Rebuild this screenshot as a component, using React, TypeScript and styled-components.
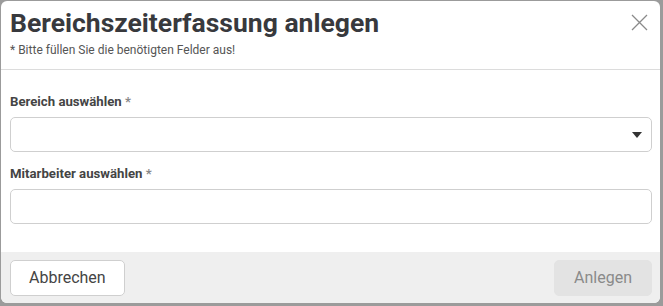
import { createGlobalStyle, styled } from 'styled-components';

const GlobalStyle = createGlobalStyle`
  html, body {
    margin: 0;
    padding: 0;
    background: #9b9b9b;
    font-family: Roboto, "Noto Sans", Arial, sans-serif;
  }
`;

type Field = {
  label: string;
  select?: boolean;
};

const fields: Field[] = [
  { label: 'Bereich auswählen', select: true },
  { label: 'Mitarbeiter auswählen' },
];

export default function App() {
  return (
    <>
      <GlobalStyle />
      <Backdrop>
        <Dialog>
          <Header>
            <TitleBlock>
              <Title>Bereichszeiterfassung anlegen</Title>
              <Hint>* Bitte füllen Sie die benötigten Felder aus!</Hint>
            </TitleBlock>
            <CloseButton aria-label="Schließen">
              <svg width="17" height="17" viewBox="0 0 17 17">
                <path d="M1 1L16 16M16 1L1 16" stroke="#8a8a8a" strokeWidth="1.3" fill="none" />
              </svg>
            </CloseButton>
          </Header>
          <Body>
            {fields.map((f) => (
              <FieldGroup key={f.label}>
                <Label>
                  {f.label} <Required>*</Required>
                </Label>
                <InputBox>
                  {f.select && (
                    <svg width="10" height="6" viewBox="0 0 10 6">
                      <path d="M0 0H10L5 6Z" fill="#333" />
                    </svg>
                  )}
                </InputBox>
              </FieldGroup>
            ))}
          </Body>
          <Footer>
            <Button>Abbrechen</Button>
            <Button $disabled>Anlegen</Button>
          </Footer>
        </Dialog>
      </Backdrop>
    </>
  );
}

const Backdrop = styled.div`
  width: 663px;
  height: 306px;
  padding: 1px 3px 3px 1px;
  box-sizing: border-box;
`;

const Dialog = styled.div`
  height: 100%;
  background: #fff;
  border-radius: 6px;
  overflow: hidden;
  display: flex;
  flex-direction: column;
`;

const Header = styled.div`
  display: flex;
  justify-content: space-between;
  align-items: flex-start;
  padding: 5px 12px 0 9px;
  height: 69px;
  box-sizing: border-box;
  border-bottom: 1px solid #dcdcdc;
`;

const TitleBlock = styled.div`
  display: flex;
  flex-direction: column;
`;

const Title = styled.h1`
  margin: 0;
  font-size: 26.5px;
  line-height: 33px;
  font-weight: 700;
  color: #38393d;
`;

const Hint = styled.p`
  margin: 4px 0 0;
  font-size: 12px;
  color: #555;
`;

const CloseButton = styled.button`
  border: 0;
  background: none;
  padding: 0;
  margin-top: 8px;
  cursor: pointer;
  display: flex;
`;

const Body = styled.div`
  flex: 1;
  padding: 24px 8px 0 9px;
  display: flex;
  flex-direction: column;
  gap: 14px;
`;

const FieldGroup = styled.div`
  display: flex;
  flex-direction: column;
  gap: 8px;
`;

const Label = styled.label`
  font-size: 13.2px;
  font-weight: 700;
  color: #444;
`;

const Required = styled.span`
  color: #888;
`;

const InputBox = styled.div`
  height: 35px;
  box-sizing: border-box;
  border: 1px solid #cfcfcf;
  border-radius: 5px;
  display: flex;
  align-items: center;
  justify-content: flex-end;
  padding-right: 9px;
`;

const Footer = styled.div`
  height: 51px;
  background: #efefef;
  display: flex;
  justify-content: space-between;
  align-items: center;
  padding: 0 8px 0 9px;
`;

const Button = styled.button<{ $disabled?: boolean }>`
  height: 36px;
  padding: 0 ${(p) => (p.$disabled ? '19px' : '18px')};
  font-family: Roboto, Arial, sans-serif;
  font-size: 16px;
  border-radius: 5px;
  border: 1px solid ${(p) => (p.$disabled ? '#e3e3e3' : '#cfcfcf')};
  background: ${(p) => (p.$disabled ? '#e3e3e3' : '#fff')};
  color: ${(p) => (p.$disabled ? '#8a8a8a' : '#444')};
  cursor: ${(p) => (p.$disabled ? 'default' : 'pointer')};
`;
